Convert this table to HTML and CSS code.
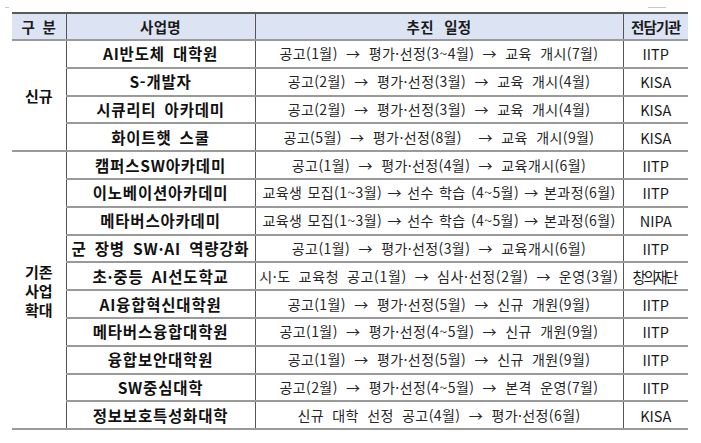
FILE: index.html
```html
<!DOCTYPE html>
<html lang="ko">
<head>
<meta charset="utf-8">
<link rel="stylesheet" href="styles.css">
</head>
<body>
<span class="mark mark-l"></span>
<span class="mark mark-r"></span>
<table class="plan">
  <colgroup>
    <col class="c-group">
    <col class="c-name">
    <col class="c-sched">
    <col class="c-org">
  </colgroup>
  <thead>
    <tr>
      <th class="group">구 분</th>
      <th>사업명</th>
      <th class="sched-h">추진 일정</th>
      <th class="org">전담기관</th>
    </tr>
  </thead>
  <tbody class="grp">
    <tr>
      <td class="group" rowspan="4">신규</td>
      <td class="name">AI반도체 대학원</td>
      <td class="sched">공고(1월) → 평가·선정(3~4월) → 교육 개시(7월)</td>
      <td class="org">IITP</td>
    </tr>
    <tr>
      <td class="name">S-개발자</td>
      <td class="sched">공고(2월) → 평가·선정(3월) → 교육 개시(4월)</td>
      <td class="org">KISA</td>
    </tr>
    <tr>
      <td class="name">시큐리티 아카데미</td>
      <td class="sched">공고(2월) → 평가·선정(3월) → 교육 개시(4월)</td>
      <td class="org">KISA</td>
    </tr>
    <tr>
      <td class="name">화이트햇 스쿨</td>
      <td class="sched">공고(5월) → 평가·선정(8월) &nbsp;→ 교육 개시(9월)</td>
      <td class="org">KISA</td>
    </tr>
  </tbody>
  <tbody class="grp">
    <tr>
      <td class="group" rowspan="10">기존<br>사업<br>확대</td>
      <td class="name">캠퍼스SW아카데미</td>
      <td class="sched">공고(1월) → 평가·선정(4월) → 교육개시(6월)</td>
      <td class="org">IITP</td>
    </tr>
    <tr>
      <td class="name">이노베이션아카데미</td>
      <td class="sched tight">교육생 모집(1~3월) → 선수 학습 (4~5월) → 본과정(6월)</td>
      <td class="org">IITP</td>
    </tr>
    <tr>
      <td class="name">메타버스아카데미</td>
      <td class="sched tight">교육생 모집(1~3월) → 선수 학습 (4~5월) → 본과정(6월)</td>
      <td class="org">NIPA</td>
    </tr>
    <tr>
      <td class="name">군 장병 SW·AI 역량강화</td>
      <td class="sched">공고(1월) → 평가·선정(3월) → 교육개시(6월)</td>
      <td class="org">IITP</td>
    </tr>
    <tr>
      <td class="name">초·중등 AI선도학교</td>
      <td class="sched wide">시·도 교육청 공고(1월) → 심사·선정(2월) → 운영(3월)</td>
      <td class="org squeeze">창의재단</td>
    </tr>
    <tr>
      <td class="name">AI융합혁신대학원</td>
      <td class="sched">공고(1월) → 평가·선정(5월) → 신규 개원(9월)</td>
      <td class="org">IITP</td>
    </tr>
    <tr>
      <td class="name">메타버스융합대학원</td>
      <td class="sched">공고(1월) → 평가·선정(4~5월) → 신규 개원(9월)</td>
      <td class="org">IITP</td>
    </tr>
    <tr>
      <td class="name">융합보안대학원</td>
      <td class="sched">공고(1월) → 평가·선정(5월) → 신규 개원(9월)</td>
      <td class="org">IITP</td>
    </tr>
    <tr>
      <td class="name">SW중심대학</td>
      <td class="sched">공고(2월) → 평가·선정(4~5월) → 본격 운영(7월)</td>
      <td class="org">IITP</td>
    </tr>
    <tr>
      <td class="name">정보보호특성화대학</td>
      <td class="sched">신규 대학 선정 공고(4월) → 평가·선정(6월)</td>
      <td class="org">KISA</td>
    </tr>
  </tbody>
</table>
</body>
</html>
```

FILE: styles.css
```css
html, body {
  margin: 0;
  padding: 0;
  background: #ffffff;
}

body {
  position: relative;
  width: 701px;
  height: 443px;
  overflow: hidden;
  font-family: "Noto Sans CJK KR", "Noto Sans", sans-serif;
  color: #1a1a1a;
}

.mark {
  position: absolute;
  top: 7px;
  height: 1px;
  background: #c8c8c8;
}
.mark-l { left: 5px; width: 4px; }
.mark-r { left: 648px; width: 18px; }

.plan {
  margin: 12px 0 0 12px;
  width: 676px;
  border-collapse: collapse;
  table-layout: fixed;
  border-top: 2px solid #5a5a5a;
  border-bottom: 2px solid #8a8a8a;
}

.c-group { width: 54px; }
.c-name { width: 189px; }
.c-sched { width: 368px; }
.c-org { width: 65px; }

.plan th,
.plan td {
  padding: 0;
  text-align: center;
  vertical-align: middle;
  white-space: nowrap;
  overflow: visible;
  border-left: 1px solid #555555;
  border-bottom: 2px solid #9a9a9a;
  line-height: 19px;
}

.plan th:first-child,
.plan td.group {
  border-left: none;
}

.plan thead tr {
  height: 27px;
}

.plan th {
  background: #dce4f4;
  font-weight: 700;
  font-size: 14.5px;
  color: #1a1a1a;
  letter-spacing: 0.3px;
}

.plan th.group {
  word-spacing: 3px;
}

.plan th.sched-h {
  word-spacing: 6px;
}

.plan th.org {
  letter-spacing: -1px;
}

.plan tbody tr {
  height: 27.8px;
}

.grp td.group {
  font-weight: 700;
  font-size: 15px;
  line-height: 19px;
  color: #111111;
}

.name {
  font-weight: 700;
  font-size: 15.5px;
  letter-spacing: 0.8px;
  color: #111111;
  word-spacing: 3px;
}

.sched {
  font-size: 14px;
  color: #262626;
  word-spacing: 4px;
  letter-spacing: 0.4px;
}

.sched.tight {
  word-spacing: 1px;
  letter-spacing: 0.4px;
}

.sched.wide {
  word-spacing: 3px;
  letter-spacing: 0.7px;
}

.org {
  font-size: 14.5px;
  color: #1a1a1a;
}

.org.squeeze {
  letter-spacing: -2.5px;
  text-indent: -3px;
}
```
